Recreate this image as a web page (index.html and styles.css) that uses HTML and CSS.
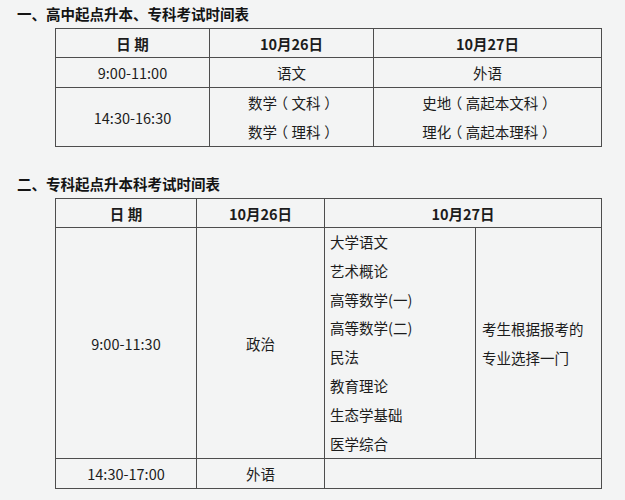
FILE: index.html
```html
<!DOCTYPE html>
<html lang="zh-CN">
<head>
<meta charset="utf-8">
<link rel="stylesheet" href="styles.css">
</head>
<body>
<div class="page">
  <h2 class="title first">一、高中起点升本、专科考试时间表</h2>
  <table class="sched t1">
    <colgroup><col class="c154"><col class="c164"><col class="c228"></colgroup>
    <tr class="head"><th>日 期</th><th>10月26日</th><th>10月27日</th></tr>
    <tr class="r30"><td>9:00-11:00</td><td>语文</td><td>外语</td></tr>
    <tr><td>14:30-16:30</td><td class="lines">数学<span class="par">（</span>文科<span class="par">）</span><br>数学<span class="par">（</span>理科<span class="par">）</span></td><td class="lines">史地<span class="par">（</span>高起本文科<span class="par">）</span><br>理化<span class="par">（</span>高起本理科<span class="par">）</span></td></tr>
  </table>

  <h2 class="title second">二、专科起点升本科考试时间表</h2>
  <table class="sched t2">
    <colgroup><col class="c141"><col class="c128"><col class="c151"><col class="c126"></colgroup>
    <tr class="head"><th>日 期</th><th>10月26日</th><th colspan="2">10月27日</th></tr>
    <tr class="big">
      <td>9:00-11:30</td>
      <td>政治</td>
      <td class="list">大学语文<br>艺术概论<br>高等数学(一)<br>高等数学(二)<br>民法<br>教育理论<br>生态学基础<br>医学综合</td>
      <td class="note">考生根据报考的<br>专业选择一门</td>
    </tr>
    <tr class="r30"><td>14:30-17:00</td><td>外语</td><td colspan="2"></td></tr>
  </table>
</div>
</body>
</html>
```

FILE: styles.css
```css
html, body {
  margin: 0;
  padding: 0;
  background: #f3f4f4;
}
body {
  font-family: "Noto Sans CJK SC", sans-serif;
  color: #1c1c1c;
  width: 625px;
  height: 500px;
  overflow: hidden;
}
.page {
  padding-left: 17px;
}
.title {
  margin: 0;
  font-size: 14.5px;
  font-weight: bold;
  line-height: 28px;
  height: 28px;
  color: #141414;
}
.title.second {
  margin-top: 23px;
}
.sched {
  margin-left: 38px;
  border-collapse: collapse;
  table-layout: fixed;
  width: 547px;
  font-size: 14.5px;
}
.sched th, .sched td {
  border: 1px solid #4d4d4d;
  padding: 0;
  text-align: center;
  vertical-align: middle;
}
.sched th {
  font-weight: bold;
  height: 28px;
}
.r30 td { height: 29px; }
.lines {
  line-height: 29px;
}
.par {
  font-feature-settings: "halt" 1;
  margin: 0 0.25em;
}
.t1 tr:last-child td { height: 57px; }
.c154 { width: 154px; }
.c164 { width: 164px; }
.c228 { width: 228px; }
.c141 { width: 141px; }
.c128 { width: 128px; }
.c151 { width: 151px; }
.c126 { width: 126px; }
.sched td.list {
  text-align: left;
  padding-left: 5px;
  line-height: 28.8px;
}
.sched td.note {
  text-align: left;
  padding-left: 6px;
  line-height: 29px;
}
```
